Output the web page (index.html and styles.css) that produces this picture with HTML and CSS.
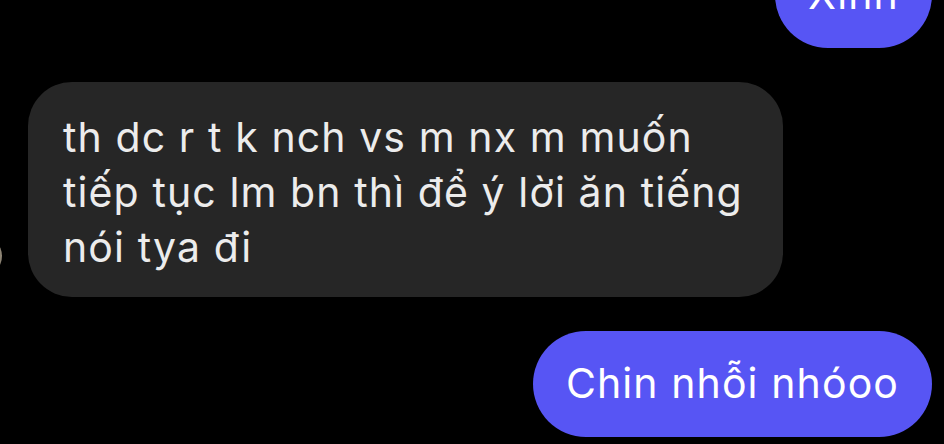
FILE: index.html
```html
<!DOCTYPE html>
<html lang="vi">
<head>
<meta charset="utf-8">
<link rel="stylesheet" href="styles.css">
</head>
<body>
<div class="chat">
  <div class="bubble sent top">Xinh</div>
  <div class="row">
    <div class="avatar"></div>
    <div class="bubble received">th dc r t k nch vs m nx m muốn tiếp tục lm bn thì để ý lời ăn tiếng nói tya đi</div>
  </div>
  <div class="bubble sent">Chin nhỗi nhóoo</div>
</div>
</body>
</html>
```
FILE: styles.css
```css
html, body {
  margin: 0;
  padding: 0;
  background: #000;
  height: 100%;
  overflow: hidden;
}
.chat {
  display: flex;
  flex-direction: column;
  gap: 34px;
  font-family: Inter, "Noto Sans", sans-serif;
  font-size: 41px;
  letter-spacing: 1.1px;
  line-height: 55px;
}
.bubble {
  box-sizing: border-box;
}
.sent {
  align-self: flex-end;
  margin-right: 12px;
  background: #5755f4;
  color: #fff;
  padding: 25px 33px 26px;
  border-radius: 53px;
}
.top {
  margin-top: -58px;
  width: 157px;
  text-align: center;
  padding-left: 0;
  padding-right: 0;
}
.row {
  display: flex;
  align-items: flex-end;
}
.avatar {
  width: 40px;
  height: 40px;
  border-radius: 50%;
  background: #8d8474;
  margin-left: -38px;
  margin-right: 26px;
  margin-bottom: 21px;
  flex: none;
}
.received {
  max-width: 755px;
  width: 755px;
  background: #262626;
  color: #ececec;
  padding: 28px 35px 22px;
  border-radius: 44px;
}
```
